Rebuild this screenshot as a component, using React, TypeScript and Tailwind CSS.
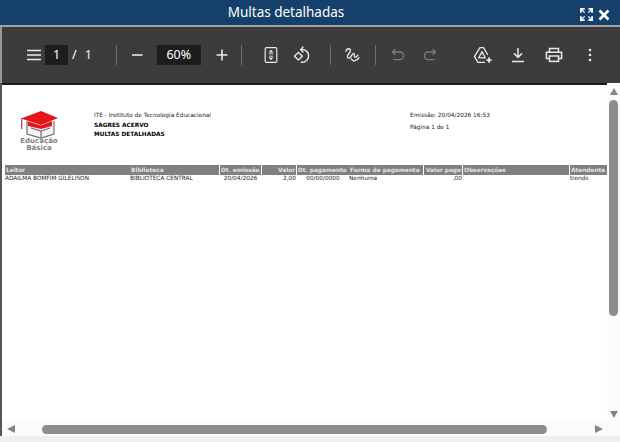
import React from "react";

const Sep = () => <div className="w-px h-5 bg-[#6f6f6f]" />;

const cols: [string, string, string, string, string][] = [
  ["w-[125px]", "Leitor", "ADAILMA BOMFIM GILELISON", "text-left", ""],
  ["w-[89px]", "Biblioteca", "BIBLIOTECA CENTRAL", "text-left", "mr-[1px]"],
  ["w-[41px]", "Dt. emissão", "20/04/2026", "text-center", "mr-[1px]"],
  ["w-[34px]", "Valor", "2,00", "text-right", "mr-[1px]"],
  ["w-[52px]", "Dt. pagamento", "00/00/0000", "text-center", ""],
  ["w-[74px]", "Forma de pagamento", "Nenhuma", "text-left", "mr-[1px]"],
  ["w-[38px]", "Valor pago", ",00", "text-right", "mr-[1px]"],
  ["w-[106px]", "Observações", "", "text-left", "mr-[1px]"],
  ["w-[37px]", "Atendente", "trends", "text-left", ""],
];

export default function App() {
  return (
    <div className="w-[620px] h-[442px] overflow-hidden bg-white flex flex-col font-['Noto_Sans','Open_Sans',sans-serif]">
      <header className="h-[25px] bg-[#14406b] flex items-center relative text-white shrink-0">
        <div className="w-[572px] text-center text-[13.5px] leading-[25px]">Multas detalhadas</div>
        <div className="absolute right-[10px] top-[8px] flex items-center gap-[5px]">
          <svg width="13" height="13" viewBox="0 0 14 14" fill="none" stroke="white" strokeWidth="2">
            <path d="M1 5V1h4M9 1h4v4M13 9v4H9M5 13H1V9" />
            <path d="M2 2l3 3M12 2L9 5M12 12L9 9M2 12l3-3" strokeWidth="1.4" />
          </svg>
          <svg width="12" height="12" viewBox="0 0 12 12" fill="none" stroke="white" strokeWidth="2.6">
            <path d="M1.5 1.5l9 9M10.5 1.5l-9 9" />
          </svg>
        </div>
      </header>
      <div className="h-[2px] bg-[#a3a3a3] shrink-0" />
      <div className="h-[56px] bg-[#3c3c3c] flex items-center text-[#e8e8e8] shrink-0 border-l-2 border-[#999999]">
        <button className="ml-[23px] w-[18px] flex justify-center">
          <svg width="16" height="12" viewBox="0 0 16 12" stroke="currentColor" strokeWidth="1.6"><path d="M1 1.5h14M1 6h14M1 10.5h14" /></svg>
        </button>
        <div className="ml-[2px] w-[23px] h-5 bg-[#1d1d1d] text-center text-[12.5px] leading-5 text-white">1</div>
        <span className="ml-[4px] text-[12.5px] text-white">/</span>
        <span className="ml-[8px] text-[12.5px] text-[#eeeeee]">1</span>
        <div className="ml-[24px]"><Sep /></div>
        <svg className="ml-[14px]" width="12" height="12" viewBox="0 0 12 12" stroke="currentColor" strokeWidth="1.6"><path d="M1 6h10.5" /></svg>
        <div className="ml-[14px] w-[44px] h-5 bg-[#1d1d1d] text-center text-[12.5px] leading-5 text-white">60%</div>
        <svg className="ml-[15px]" width="12" height="12" viewBox="0 0 12 12" stroke="currentColor" strokeWidth="1.6"><path d="M.5 6h11M6 .5v11" /></svg>
        <div className="ml-[13px]"><Sep /></div>
        <svg className="ml-[22px]" width="14" height="18" viewBox="0 0 14 18" fill="none" stroke="currentColor" strokeWidth="1.2">
          <rect x="1.2" y="1.6" width="11.6" height="14.8" rx="1.2" />
          <path d="M7 3.8L4.6 6.6h4.8zM7 14.2l-2.4-2.8h4.8z" fill="currentColor" stroke="none" />
          <path d="M4.8 7.8h4.4M4.8 10.2h4.4" strokeWidth="0.8" />
        </svg>
        <svg className="ml-[15px]" width="20" height="20" viewBox="0 0 20 20" fill="none" stroke="currentColor" strokeWidth="1.4" strokeLinejoin="round" strokeLinecap="round">
          <path d="M1.4 11.2L5.4 7.4l4 3.8-4 3.9z" />
          <path d="M8 4.6a6.4 6.4 0 1 1 .2 12.6" />
          <path d="M10 2L7.6 4.6 10 7" />
        </svg>
        <div className="ml-[17px]"><Sep /></div>
        <svg className="ml-[13px]" width="18" height="18" viewBox="0 0 18 18" fill="none" stroke="currentColor" strokeWidth="1.4" strokeLinecap="round">
          <path d="M2 5.2C2.5 2.6 5.8 1.8 6.4 4c.5 2-3.4 4.6-3.1 7 .3 1.7 2.3 1.4 3.4 0 1.2-1.6 1.2-3.4 2.6-3.6 1.4-.2.8 2.1 1.2 3 .5 1.4 2.2.7 3.4-1.2M7.4 13c1.4 3 5 2.2 7.6-1.2" />
        </svg>
        <div className="ml-[13px]"><Sep /></div>
        <svg className="ml-[15px] text-[#7a7a7a]" width="14" height="14" viewBox="0 0 14 14" fill="none" stroke="currentColor" strokeWidth="1.4" strokeLinecap="round" strokeLinejoin="round">
          <path d="M4 1.4L1.4 4 4 6.4M1.6 4h7.2a3.6 3.6 0 0 1 0 7.6H3" />
        </svg>
        <svg className="ml-[18px] text-[#7a7a7a]" width="14" height="14" viewBox="0 0 14 14" fill="none" stroke="currentColor" strokeWidth="1.4" strokeLinecap="round" strokeLinejoin="round">
          <path d="M10 1.4L12.6 4 10 6.4M12.4 4H5.2a3.6 3.6 0 0 0 0 7.6H11" />
        </svg>
        <svg className="ml-[36px]" width="20" height="20" viewBox="0 0 20 20" fill="none" stroke="currentColor" strokeWidth="1.3" strokeLinejoin="round">
          <path d="M14.8 10L10.6 2.6H7L1.4 11.6 5 17.4h7" />
          <path d="M9 6.6L5.8 12.8h6.4z" />
          <path d="M16 12.6v5.2M13.4 15.2h5.2" strokeWidth="1.8" />
        </svg>
        <svg className="ml-[18px]" width="14" height="16" viewBox="0 0 14 16" fill="none" stroke="currentColor" strokeWidth="1.5">
          <path d="M7 1v9M3 6.4L7 10.4l4-4M1 14.4h12" />
        </svg>
        <svg className="ml-[20px]" width="18" height="16" viewBox="0 0 18 16" fill="none" stroke="currentColor" strokeWidth="1.5">
          <path d="M4.5 5V1.4h9V5M4.5 11.4H1.4V5.2h15.2v6.2h-3.1" />
          <rect x="4.5" y="9" width="9" height="5.4" />
        </svg>
        <svg className="ml-[25px]" width="4" height="14" viewBox="0 0 4 14" fill="currentColor">
          <circle cx="2" cy="2" r="1.3" /><circle cx="2" cy="7" r="1.3" /><circle cx="2" cy="12" r="1.3" />
        </svg>
      </div>
      <div className="h-[339px] flex shrink-0 border-l-2 border-[#555555]">
        <div className="w-[605px] flex flex-col shrink-0">
          <div className="h-[2px] bg-[#1a1a1a] shrink-0" />
          <main className="flex-1 min-h-0 bg-white pt-[20px] font-['DejaVu_Sans',sans-serif]">
            <div className="flex h-[60px]">
              <div className="w-[92px] pl-[18px] pt-[5px]">
                <svg className="block" width="40" height="29" viewBox="0 0 40 29">
                  <path d="M7 11v13l14 4 13-4V11" fill="#f4f4f4" stroke="#707070" strokeWidth="1.2" />
                  <path d="M11 18l10 3 9-3M21 21v7" fill="none" stroke="#707070" strokeWidth="1.2" />
                  <path d="M1 8.5L21 1l17 7-17 7z" fill="#e8141c" />
                  <path d="M8 11.5v4.5l13 3 11-3v-5l-11 4.5z" fill="#e8141c" />
                  <path d="M1.7 8.5V19" stroke="#c0323a" strokeWidth="1.2" />
                </svg>
                <div className="w-[38px] text-center text-[7px] leading-[7px] font-bold text-[#808080] mt-[-1px]">Educação<br />Básica</div>
              </div>
              <div className="w-[316px] text-[5.8px] leading-[9.5px] pt-[6px] text-[#222]">
                <div>ITE - Instituto de Tecnologia Educacional</div>
                <div className="font-bold text-black">SAGRES ACERVO</div>
                <div className="font-bold text-black">MULTAS DETALHADAS</div>
              </div>
              <div className="text-[5.8px] text-[#222] pt-[4px]">
                <div className="leading-[12px]">Emissão: 20/04/2026 16:53</div>
                <div className="leading-[12px]">Página 1 de 1</div>
              </div>
            </div>
            <div className="ml-[3px] flex h-[10px]">
              {cols.map(([w, h, , a, gap]) => (
                <div key={h} className={`${w} ${gap} shrink-0 bg-[#808080] text-[#e4e4e4] font-bold text-[5.8px] leading-[10px] px-[1px] whitespace-nowrap overflow-hidden ${a === "text-right" ? "text-right" : "text-left"}`}>{h}</div>
              ))}
            </div>
            <div className="ml-[3px] flex h-[8px]">
              {cols.map(([w, h, v, a, gap]) => (
                <div key={h} className={`${w} ${gap} shrink-0 ${a} text-[#1c1c1c] text-[5.8px] leading-[7px] whitespace-nowrap overflow-hidden`}>{v}</div>
              ))}
            </div>
          </main>
        </div>
        <div className="w-[13px] bg-[#fbfbfb] flex flex-col shrink-0 pl-[2px] pt-[5px]">
          <div className="ml-[1px] w-0 h-0 border-x-[4.5px] border-x-transparent border-b-[7px] border-b-[#848484]" />
          <div className="mt-[5px] w-[9px] h-[216px] rounded-full bg-[#8c8c8c]" />
          <div className="flex-1" />
          <div className="ml-[1px] mb-[4px] w-0 h-0 border-x-[4.5px] border-x-transparent border-t-[7px] border-t-[#848484]" />
        </div>
      </div>
      <div className="h-[14px] bg-[#fbfbfb] flex items-center shrink-0 border-l-2 border-[#555555]">
        <div className="ml-[5px] w-0 h-0 border-y-[4.5px] border-y-transparent border-r-[8px] border-r-[#848484]" />
        <div className="ml-[27px] w-[505px] h-[9px] rounded-full bg-[#8c8c8c]" />
        <div className="ml-[48px] w-0 h-0 border-y-[4.5px] border-y-transparent border-l-[8px] border-l-[#848484]" />
      </div>
      <div className="flex-1 bg-[#efefef]" />
    </div>
  );
}
